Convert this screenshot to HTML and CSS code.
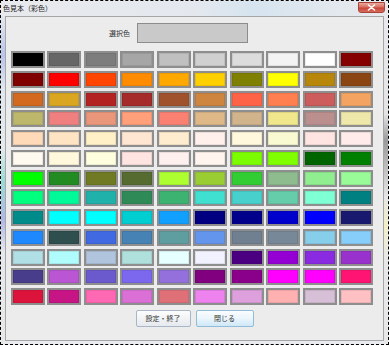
FILE: index.html
```html
<!DOCTYPE html>
<html lang="ja">
<head>
<meta charset="utf-8">
<title>色見本（彩色）</title>
<link rel="stylesheet" href="styles.css">
</head>
<body>
<div class="screen">
  <div class="titlebar">
    <span class="title">色見本（彩色）</span>
    <span class="close"><svg width="9" height="7" viewBox="0 0 9 7"><path d="M1.5 1 L7.5 6 M7.5 1 L1.5 6" stroke="#fff" stroke-width="1.6" stroke-linecap="round"/></svg></span>
  </div>
  <div class="body">
    <div class="frame-left"></div>
    <div class="client">
      <div class="selected-row">
        <span class="label">選択色</span>
        <div class="selected"></div>
      </div>
      <div class="palette">
        <div class="sw" style="background:#000000"></div>
        <div class="sw" style="background:#666666"></div>
        <div class="sw" style="background:#7d7d7d"></div>
        <div class="sw" style="background:#a6a6a6"></div>
        <div class="sw" style="background:#c0c0c0"></div>
        <div class="sw" style="background:#d0d0d0"></div>
        <div class="sw" style="background:#dcdcdc"></div>
        <div class="sw" style="background:#f3f3f3"></div>
        <div class="sw" style="background:#ffffff"></div>
        <div class="sw" style="background:#850000"></div>

        <div class="sw" style="background:#800000"></div>
        <div class="sw" style="background:#ff0000"></div>
        <div class="sw" style="background:#ff4500"></div>
        <div class="sw" style="background:#ff8c00"></div>
        <div class="sw" style="background:#ffa800"></div>
        <div class="sw" style="background:#ffd000"></div>
        <div class="sw" style="background:#808000"></div>
        <div class="sw" style="background:#ffff00"></div>
        <div class="sw" style="background:#b8860b"></div>
        <div class="sw" style="background:#8b4513"></div>

        <div class="sw" style="background:#d2691e"></div>
        <div class="sw" style="background:#daa520"></div>
        <div class="sw" style="background:#b22222"></div>
        <div class="sw" style="background:#a52a2a"></div>
        <div class="sw" style="background:#a0522d"></div>
        <div class="sw" style="background:#cd853f"></div>
        <div class="sw" style="background:#ff6347"></div>
        <div class="sw" style="background:#ff7f50"></div>
        <div class="sw" style="background:#cd5c5c"></div>
        <div class="sw" style="background:#f4a460"></div>

        <div class="sw" style="background:#bdb76b"></div>
        <div class="sw" style="background:#f08080"></div>
        <div class="sw" style="background:#e9967a"></div>
        <div class="sw" style="background:#ffa07a"></div>
        <div class="sw" style="background:#fa8072"></div>
        <div class="sw" style="background:#deb887"></div>
        <div class="sw" style="background:#d2b48c"></div>
        <div class="sw" style="background:#f0e68c"></div>
        <div class="sw" style="background:#bc8f8f"></div>
        <div class="sw" style="background:#eee8aa"></div>

        <div class="sw" style="background:#ffdab9"></div>
        <div class="sw" style="background:#ffe4c4"></div>
        <div class="sw" style="background:#fff0c8"></div>
        <div class="sw" style="background:#ffe6d2"></div>
        <div class="sw" style="background:#ffeccf"></div>
        <div class="sw" style="background:#fff0ec"></div>
        <div class="sw" style="background:#fff8dc"></div>
        <div class="sw" style="background:#fafad2"></div>
        <div class="sw" style="background:#ffe4e1"></div>
        <div class="sw" style="background:#ffecea"></div>

        <div class="sw" style="background:#fffaf0"></div>
        <div class="sw" style="background:#fff8dc"></div>
        <div class="sw" style="background:#ffffe0"></div>
        <div class="sw" style="background:#ffe4e1"></div>
        <div class="sw" style="background:#fff0f0"></div>
        <div class="sw" style="background:#fff5ee"></div>
        <div class="sw" style="background:#7cfc00"></div>
        <div class="sw" style="background:#7fff00"></div>
        <div class="sw" style="background:#006400"></div>
        <div class="sw" style="background:#008000"></div>

        <div class="sw" style="background:#00ff00"></div>
        <div class="sw" style="background:#228b22"></div>
        <div class="sw" style="background:#6f7a22"></div>
        <div class="sw" style="background:#556b2f"></div>
        <div class="sw" style="background:#adff2f"></div>
        <div class="sw" style="background:#9acd32"></div>
        <div class="sw" style="background:#32cd32"></div>
        <div class="sw" style="background:#8fbc8f"></div>
        <div class="sw" style="background:#90ee90"></div>
        <div class="sw" style="background:#98fb98"></div>

        <div class="sw" style="background:#00ff7f"></div>
        <div class="sw" style="background:#00fa9a"></div>
        <div class="sw" style="background:#20b2aa"></div>
        <div class="sw" style="background:#2e8b57"></div>
        <div class="sw" style="background:#3cb371"></div>
        <div class="sw" style="background:#40e0d0"></div>
        <div class="sw" style="background:#48d1cc"></div>
        <div class="sw" style="background:#66cdaa"></div>
        <div class="sw" style="background:#7fffd4"></div>
        <div class="sw" style="background:#008080"></div>

        <div class="sw" style="background:#008b8b"></div>
        <div class="sw" style="background:#00ffff"></div>
        <div class="sw" style="background:#00ffff"></div>
        <div class="sw" style="background:#00ced1"></div>
        <div class="sw" style="background:#12a0ff"></div>
        <div class="sw" style="background:#000080"></div>
        <div class="sw" style="background:#00008b"></div>
        <div class="sw" style="background:#0000cd"></div>
        <div class="sw" style="background:#0000ff"></div>
        <div class="sw" style="background:#191970"></div>

        <div class="sw" style="background:#1e88ff"></div>
        <div class="sw" style="background:#2f4f4f"></div>
        <div class="sw" style="background:#4169e1"></div>
        <div class="sw" style="background:#4682b4"></div>
        <div class="sw" style="background:#5f9ea0"></div>
        <div class="sw" style="background:#6495ed"></div>
        <div class="sw" style="background:#708090"></div>
        <div class="sw" style="background:#778899"></div>
        <div class="sw" style="background:#87ceeb"></div>
        <div class="sw" style="background:#87cefa"></div>

        <div class="sw" style="background:#b0e0e6"></div>
        <div class="sw" style="background:#b0fcfc"></div>
        <div class="sw" style="background:#b0c4de"></div>
        <div class="sw" style="background:#b0e0dc"></div>
        <div class="sw" style="background:#e6ffff"></div>
        <div class="sw" style="background:#f2f2ff"></div>
        <div class="sw" style="background:#4b0082"></div>
        <div class="sw" style="background:#9400d3"></div>
        <div class="sw" style="background:#8a2be2"></div>
        <div class="sw" style="background:#9932cc"></div>

        <div class="sw" style="background:#483d8b"></div>
        <div class="sw" style="background:#ba55d3"></div>
        <div class="sw" style="background:#6a5acd"></div>
        <div class="sw" style="background:#7b68ee"></div>
        <div class="sw" style="background:#9370db"></div>
        <div class="sw" style="background:#800080"></div>
        <div class="sw" style="background:#8b008b"></div>
        <div class="sw" style="background:#ff00ff"></div>
        <div class="sw" style="background:#ff00ff"></div>
        <div class="sw" style="background:#ff1474"></div>

        <div class="sw" style="background:#dc143c"></div>
        <div class="sw" style="background:#c71585"></div>
        <div class="sw" style="background:#ff69b4"></div>
        <div class="sw" style="background:#da70d6"></div>
        <div class="sw" style="background:#e07078"></div>
        <div class="sw" style="background:#ee82ee"></div>
        <div class="sw" style="background:#dda0dd"></div>
        <div class="sw" style="background:#ffb0b0"></div>
        <div class="sw" style="background:#d8bfd8"></div>
        <div class="sw" style="background:#ffc0c4"></div>
      </div>
      <div class="buttons">
        <button class="btn btn-ok">設定・終了</button>
        <button class="btn btn-close">閉じる</button>
      </div>
    </div>
    <div class="frame-right"></div>
  </div>
</div>
</body>
</html>
```
FILE: styles.css
```css
* { box-sizing: border-box; }

html, body {
  margin: 0;
  padding: 0;
  background: #ffffff;
}

body {
  font-family: "Noto Sans CJK JP", "Noto Sans", sans-serif;
  color: #222;
}

.screen {
  width: 389px;
  height: 345px;
  border: 1px dashed #000;
  display: flex;
  flex-direction: column;
  background: #e9ebee;
}

.titlebar {
  height: 15px;
  display: flex;
  align-items: flex-start;
  background: linear-gradient(to right, #e8eaed 0%, #e4e8ee 50%, #d6e4ef 65%, #e2e8ee 85%, #e8eaed 100%);
}

.title {
  font-size: 7px;
  line-height: 9px;
  padding: 3px 0 0 2px;
  color: #1a1a1a;
}

.close {
  margin: 1px 3px 0 auto;
  width: 27px;
  height: 11px;
  border: 1px solid #a8443a;
  border-radius: 0 0 3px 3px;
  background: linear-gradient(#eaa89c 0%, #d9705f 45%, #c9473a 55%, #d66a5c 100%);
  display: flex;
  align-items: center;
  justify-content: center;
}

.body {
  flex: 1;
  display: flex;
}

.frame-left {
  width: 4px;
  background: linear-gradient(#e4e8ee 0%, #b8c4ec 12%, #dfe6ef 22%, #e6eaee 40%, #98dcd6 50%, #b0b8e8 62%, #e6e8ec 72%, #e8e8e8 100%);
}

.frame-right {
  width: 4px;
  background: linear-gradient(#e8eaee 0%, #e4e4e4 30%, #9a9a9a 38%, #bdbdbd 46%, #e6e6e6 55%, #f2efc8 64%, #e8e8e8 74%);
}

.client {
  width: 379px;
  margin-bottom: 3px;
  border: 1px solid #a6a6a6;
  background: #ececec;
  display: flex;
  flex-direction: column;
}

.selected-row {
  margin-top: 6px;
  height: 20px;
  display: flex;
  align-items: center;
  padding-left: 103px;
  gap: 7px;
}

.label {
  font-size: 7px;
  line-height: 9px;
  color: #333;
}

.selected {
  width: 111px;
  height: 20px;
  background: #c9c9c9;
  border: 1px solid #8c8c8c;
}

.palette {
  margin: 8px 0 0 5px;
  display: grid;
  grid-template-columns: repeat(10, 34px);
  grid-auto-rows: 17px;
  column-gap: 2.44px;
  row-gap: 2.75px;
}

.sw {
  border: 2px solid #8e8e8e;
  box-shadow: inset 0 0 0 1px rgba(0, 0, 0, 0.08);
}

.buttons {
  margin-top: 5px;
  display: flex;
  justify-content: center;
  gap: 5px;
}

.btn {
  height: 17px;
  padding: 0;
  font-family: "Noto Sans CJK JP", "Noto Sans", sans-serif;
  font-size: 7px;
  line-height: 15px;
  color: #333;
  border-radius: 2px;
}

.btn-ok {
  width: 55px;
  border: 1px solid #a9b6c6;
  background: linear-gradient(#fdfdfd 0%, #f1f3f5 50%, #e6e9ee 100%);
}

.btn-close {
  width: 58px;
  border: 1px solid #93bcd8;
  background: linear-gradient(#fafdff 0%, #eaf5fc 50%, #cfe8f7 100%);
}
```
